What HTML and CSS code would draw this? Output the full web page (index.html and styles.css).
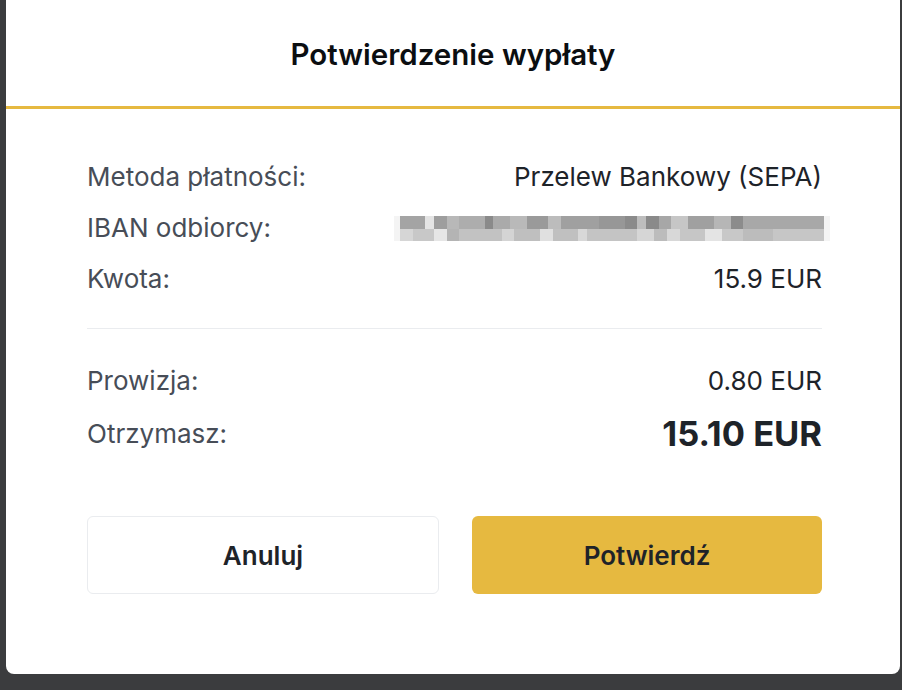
FILE: index.html
```html
<!DOCTYPE html>
<html lang="pl">
<head>
<meta charset="utf-8">
<title>Potwierdzenie wypłaty</title>
<link rel="stylesheet" href="styles.css">
</head>
<body>
<div class="overlay">
  <div class="modal">
    <div class="modal-header">Potwierdzenie wypłaty</div>
    <div class="modal-body">
      <div class="row"><span class="label">Metoda płatności:</span><span class="value">Przelew Bankowy (SEPA)</span></div>
      <div class="row"><span class="label">IBAN odbiorcy:</span><span class="iban"><span class="iban-top"></span><span class="iban-bottom"></span></span></div>
      <div class="row"><span class="label">Kwota:</span><span class="value">15.9 EUR</span></div>
      <div class="divider"></div>
      <div class="row"><span class="label">Prowizja:</span><span class="value">0.80 EUR</span></div>
      <div class="row row-total"><span class="label">Otrzymasz:</span><span class="value total">15.10 EUR</span></div>
      <div class="actions">
        <button class="btn btn-cancel">Anuluj</button>
        <button class="btn btn-confirm">Potwierdź</button>
      </div>
    </div>
  </div>
</div>
</body>
</html>
```
FILE: styles.css
```css
* { box-sizing: border-box; }
html, body {
  margin: 0;
  height: 100%;
}
body {
  background: #3b3c3e;
  font-family: Inter, "Noto Sans", sans-serif;
  overflow: hidden;
}
.overlay {
  display: flex;
  justify-content: flex-start;
  padding-left: 6px;
}
.modal {
  width: 894px;
  height: 674px;
  background: #fff;
  border-radius: 0 0 8px 8px;
  display: flex;
  flex-direction: column;
}
.modal-header {
  height: 109px;
  border-bottom: 3px solid #e6b940;
  display: flex;
  align-items: center;
  justify-content: center;
  padding-top: 2px;
  font-size: 29.5px;
  font-weight: 600;
  color: #0b0e11;
}
.modal-body {
  padding: 42px 78px 0 81px;
  display: flex;
  flex-direction: column;
}
.row {
  height: 51px;
  display: flex;
  align-items: center;
  justify-content: space-between;
  font-size: 26px;
}
.label { color: #474d57; }
.value { color: #1e2329; }
.iban {
  width: 436px;
  height: 25px;
  margin-right: -8px;
  margin-top: 2px;
  display: flex;
  flex-direction: column;
  background: #f4f4f4;
  padding: 0 6px;
}
.iban-top {
  flex: 1;
  background:
    linear-gradient(90deg,
      #a4a4a4 0 6%, #e4e4e4 6% 8%, #9e9e9e 8% 11%, #b8b8b8 11% 14%, #adadad 14% 20%,
      #8a8a8a 20% 22%, #aaaaaa 22% 26%, #b9b9b9 26% 30%, #9a9a9a 30% 35%, #bcbcbc 35% 38%,
      #a0a0a0 38% 47%, #979797 47% 53%, #8b8b8b 53% 56%, #bdbdbd 56% 58%, #8a8a8a 58% 61%,
      #a7a7a7 61% 64%, #c6c6c6 64% 68%, #a0a0a0 68% 74%, #b6b6b6 74% 78%, #8c8c8c 78% 81%,
      #a8a8a8 81% 100%);
}
.iban-bottom {
  flex: 1;
  background:
    linear-gradient(90deg,
      #d6d6d6 0 3%, #c8c8c8 3% 8%, #e6e6e6 8% 11%, #b4b4b4 11% 14%, #c2c2c2 14% 24%,
      #d4d4d4 24% 27%, #bfbfbf 27% 33%, #e0e0e0 33% 36%, #c0c0c0 36% 42%, #d8d8d8 42% 44%,
      #c4c4c4 44% 56%, #d6d6d6 56% 60%, #bcbcbc 60% 63%, #d8d8d8 63% 66%, #c6c6c6 66% 72%,
      #e4e4e4 72% 76%, #c8c8c8 76% 81%, #bcbcbc 81% 88%, #c6c6c6 88% 100%);
}
.divider {
  height: 1px;
  background: #eaecef;
  margin: 24px 0 26px;
}
.row-total { height: 55px; }
.total {
  font-size: 34.5px;
  font-weight: 700;
}
.actions {
  display: flex;
  gap: 33px;
  margin-top: 55px;
}
.btn {
  flex: 1;
  height: 78px;
  border-radius: 6px;
  font-family: inherit;
  font-size: 26px;
  font-weight: 600;
  color: #1e2329;
  cursor: pointer;
}
.btn-cancel {
  background: #fff;
  border: 1.5px solid #eaecef;
}
.btn-confirm {
  background: #e6b940;
  border: none;
}
```
